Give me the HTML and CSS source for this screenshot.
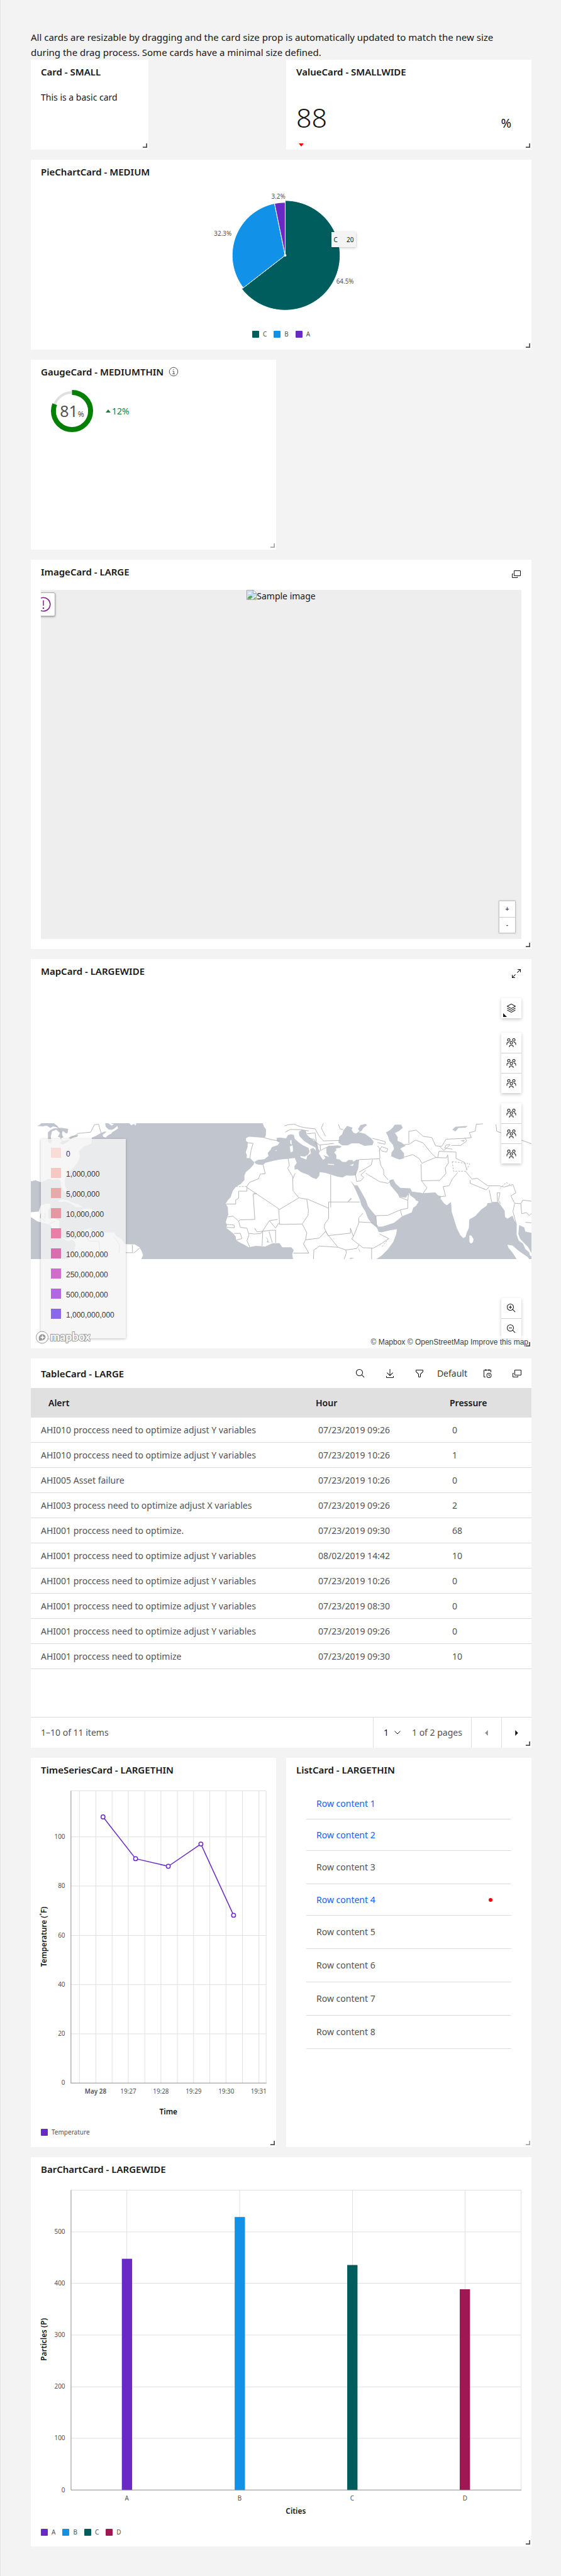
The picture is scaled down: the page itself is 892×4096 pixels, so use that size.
FILE: index.html
```html
<!DOCTYPE html>
<html lang="en">
<head>
<meta charset="utf-8">
<meta name="viewport" content="width=device-width, initial-scale=1">
<title>Dashboard cards</title>
<link rel="stylesheet" href="styles.css">
</head>
<body>
<svg class="sprite" aria-hidden="true">
  <symbol id="i-search" viewBox="0 0 32 32"><path d="M29,27.5859l-7.5521-7.5521a11.0177,11.0177,0,1,0-1.4141,1.4141L27.5859,29ZM4,13a9,9,0,1,1,9,9A9.01,9.01,0,0,1,4,13Z"/></symbol>
  <symbol id="i-download" viewBox="0 0 32 32"><path d="M26 24v4H6V24H4v4a2 2 0 002 2H26a2 2 0 002-2V24zM26 14L24.59 12.59 17 20.17 17 2 15 2 15 20.17 7.41 12.59 6 14 16 24 26 14z"/></symbol>
  <symbol id="i-filter" viewBox="0 0 32 32"><path d="M18,28H14a2,2,0,0,1-2-2V18.41L4.59,11A2,2,0,0,1,4,9.59V6A2,2,0,0,1,6,4H26a2,2,0,0,1,2,2V9.59A2,2,0,0,1,27.41,11L20,18.41V26A2,2,0,0,1,18,28ZM6,6V9.59l8,8V26h4V17.59l8-8V6Z"/></symbol>
  <symbol id="i-popup" viewBox="0 0 32 32"><path d="M28,4H10A2,2,0,0,0,8,6V20a2,2,0,0,0,2,2H28a2,2,0,0,0,2-2V6A2,2,0,0,0,28,4Zm0,16H10V6H28ZM18,26H4V16H6V14H4a2,2,0,0,0-2,2V26a2,2,0,0,0,2,2H18a2,2,0,0,0,2-2V24H18Z"/></symbol>
  <symbol id="i-max" viewBox="0 0 32 32"><path d="M20 2V4H26.586L18 12.582 19.414 14 28 5.414V12H30V2ZM14 19.416L12.592 18 4 26.586V20H2V30H12V28H5.414Z"/></symbol>
  <symbol id="i-calendar" viewBox="0 0 32 32"><path d="M21,30a8,8,0,1,1,8-8A8,8,0,0,1,21,30Zm0-14a6,6,0,1,0,6,6A6,6,0,0,0,21,16ZM22.59 25L20 22.41V18H22V21.59L24 23.59ZM28,6a2,2,0,0,0-2-2H22V2H20V4H12V2H10V4H6A2,2,0,0,0,4,6V26a2,2,0,0,0,2,2h4V26H6V6h4V8h2V6h8V8h2V6h4v6h2Z"/></symbol>
  <symbol id="i-layers" viewBox="0 0 32 32"><path d="M16,24a1,1,0,0,1-.4741-.12l-13-7L3.474,15.12,16,21.8643,28.526,15.12l.948,1.7607-13,7A1,1,0,0,1,16,24ZM16,30a1,1,0,0,1-.4741-.12l-13-7L3.474,21.12,16,27.8643,28.526,21.12l.948,1.7607-13,7A1,1,0,0,1,16,30ZM16,18a1,1,0,0,1-.4741-.12l-13-7a1,1,0,0,1,0-1.7607l13-7a1,1,0,0,1,.9482,0l13,7a1,1,0,0,1,0,1.7607l-13,7A1,1,0,0,1,16,18ZM5.1094,10,16,15.8643,26.8906,10,16,4.1358Z"/></symbol>
  <symbol id="i-people" viewBox="0 0 32 32"><path d="M26,14H24v2h2a3,3,0,0,1,3,3v4h2V19A5,5,0,0,0,26,14ZM24,4a3,3,0,1,1-3,3,3,3,0,0,1,3-3m0-2a5,5,0,1,0,5,5A5,5,0,0,0,24,2ZM23,30H21V28a3,3,0,0,0-3-3H14a3,3,0,0,0-3,3v2H9V28a5,5,0,0,1,5-5h4a5,5,0,0,1,5,5ZM16,13a3,3,0,1,1-3,3,3,3,0,0,1,3-3m0-2a5,5,0,1,0,5,5A5,5,0,0,0,16,11ZM8,14H6a5,5,0,0,0-5,5v4H3V19a3,3,0,0,1,3-3H8ZM8,4A3,3,0,1,1,5,7,3,3,0,0,1,8,4M8,2a5,5,0,1,0,5,5A5,5,0,0,0,8,2Z"/></symbol>
  <symbol id="i-glass" viewBox="0 0 32 32"><path d="M21.4479,20A10.856,10.856,0,0,0,24,13,11,11,0,1,0,13,24a10.856,10.856,0,0,0,7-2.5521L27.5859,29,29,27.5859ZM13,22a9,9,0,1,1,9-9A9.01,9.01,0,0,1,13,22Z"/></symbol>
  <symbol id="i-grip" viewBox="0 0 8 8"><path d="M6 0h2v8H0V6h6z"/></symbol>
</svg>

<main class="page">
  <p class="intro">All cards are resizable by dragging and the card size prop is automatically updated to match the new size during the drag process. Some cards have a minimal size defined.</p>

  <div class="grid">
    <section class="card card-small">
      <header class="head"><h2>Card - SMALL</h2></header>
      <p class="basic">This is a basic card</p>
      <svg class="grip"><use href="#i-grip"/></svg>
    </section>

    <section class="card card-smallwide">
      <header class="head"><h2>ValueCard - SMALLWIDE</h2></header>
      <div class="value"><span class="value-num">88</span><span class="value-unit">%</span></div>
      <svg class="value-trend" viewBox="0 0 8 5"><path d="M0 0h8L4 5z"/></svg>
      <svg class="grip"><use href="#i-grip"/></svg>
    </section>

    <section class="card card-medium">
      <header class="head"><h2>PieChartCard - MEDIUM</h2></header>
      <div class="plot">
        <svg class="chart" viewBox="0 0 803 218">
          <g class="pie">
            <path fill="#005d5d" d="M408 105V17A88 88 0 1 1 338.4 158.8Z"/>
            <path fill="#1192e8" d="M408 105L340.8 157A85 85 0 0 1 390.9 21.7Z"/>
            <path fill="#6929c4" d="M408 105L390.9 21.7A85 85 0 0 1 408 20Z"/>
          </g>
          <circle cx="408" cy="105" r="2" fill="#fff"/>
          <g class="tick mid"><text x="397" y="14">3.2%</text><text x="308" y="74">32.3%</text><text x="504" y="150">64.5%</text></g>
        </svg>
        <div class="tip"><span>C</span><span>20</span></div>
      </div>
      <ul class="legend legend-center">
        <li><i class="sw teal"></i>C</li><li><i class="sw blue"></i>B</li><li><i class="sw purple"></i>A</li>
      </ul>
      <svg class="grip"><use href="#i-grip"/></svg>
    </section>

    <section class="card card-mediumthin">
      <header class="head"><h2>GaugeCard - MEDIUMTHIN</h2>
        <button class="info" aria-label="More information"><svg viewBox="0 0 16 16"><circle cx="8" cy="8" r="6.8"/><path d="M6.5 7.2H8.3V11.5M6.2 11.5H10M7.3 4.6H8.6"/></svg></button>
      </header>
      <div class="gauge">
        <div class="dial">
          <svg viewBox="0 0 68 68"><circle class="dial-track" cx="34" cy="34" r="30"/><circle class="dial-value" cx="34" cy="34" r="30" pathLength="100" transform="rotate(-90 34 34)"/></svg>
          <p class="dial-text"><span>81</span><small>%</small></p>
        </div>
        <p class="trend"><svg viewBox="0 0 8 5"><path d="M0 5h8L4 0z"/></svg>12%</p>
      </div>
      <svg class="grip faint"><use href="#i-grip"/></svg>
    </section>

    <section class="card card-large">
      <header class="head"><h2>ImageCard - LARGE</h2><button class="tool" aria-label="Expand"><svg><use href="#i-popup"/></svg></button></header>
      <div class="picture">
        <span class="broken"><svg viewBox="0 0 16 16"><path fill="#fff" stroke="#a0a0a0" d="M.5 .5H11L15.500 5V15.500H.5z"/><path fill="#c3d9f7" d="M1.500 1.500H10V6H14.500V9L9 14.500H1.500z"/><path fill="#fff" d="M2.500 6Q3 3.500 5 4 7 3 7.500 6z"/><path fill="#53a93f" d="M1.500 14.500V13Q6 7 9.500 10.500L6.500 14.500zM10 14.500L14.500 11V14.500z"/><path fill="none" stroke="#a0a0a0" d="M10.500 .5V5.500H15.500"/></svg>Sample image</span>
        <button class="hotspot" aria-label="Alert"><svg viewBox="0 0 24 24"><circle cx="12" cy="12" r="10.800"/><path d="M12 5.500V14"/><circle class="dot" cx="12" cy="18" r="1.300"/></svg></button>
        <div class="stepper"><button>+</button><button>-</button></div>
      </div>
      <svg class="grip"><use href="#i-grip"/></svg>
    </section>

    <section class="card card-large">
      <header class="head"><h2>MapCard - LARGEWIDE</h2><button class="tool" aria-label="Expand"><svg><use href="#i-max"/></svg></button></header>
      <svg class="map" viewBox="12 15 2409 654" role="img" aria-label="World map">
        <rect class="sea" x="12" y="15" width="2409" height="654"/>
        <g class="land">
          <path d="M12 15H370L372 32 386 45 400 47 412 42 428 28 432 40 418 50 404 58 398 66 385 72 372 84 360 80 358 70 377 56 366 55 348 63 325 76 306 84 303 112 285 122 268 126 255 138 243 150 248 172 245 188 234 208 218 228 196 246 185 268 176 285 176 315 186 336 190 360 180 352 168 338 158 318 154 290 138 284 118 288 96 282 72 296 58 298 35 290 12 294Z"/>
          <path d="M485 15H520L516 26 508 18 496 25ZM305 15L314 26 306 22ZM385 15L400 26 412 20 395 15Z"/>
          <path d="M12 443L50 440 60 410 84 403 108 402 104 424 95 435 97 474 122 472 150 484 148 540 162 565 185 573 200 565 224 574 240 558 268 530 290 522 302 534 335 530 352 540 380 541 412 540 425 560 448 572 465 597 512 598 535 612 545 630 552 650 544 669H190L214 645 228 600 222 584 208 574 196 582 182 578 145 562 120 535 108 506 80 496 45 488 12 467Z"/>
          <path d="M140 388L165 381 190 386 215 398 240 405 262 418 228 418 206 402 178 392 150 395ZM258 428L300 425 328 440 300 446 266 441ZM285 528L300 518 310 522Z"/>
          <path d="M1128 15L1134 32 1144 45 1143 72 1138 86 1100 82 1062 80 1048 86 1047 98 1056 108 1055 130 1046 155 1052 168 1050 182 1068 184 1080 196 1088 203 1084 214 1068 232 1047 250 1040 266 1040 288 1022 308 1000 320 984 340 974 370 960 386 950 402 960 420 962 455 950 490 956 502 954 520 985 545 998 560 1000 578 1020 590 1040 600 1060 612 1095 605 1140 608 1176 592 1209 592 1222 612 1265 612 1277 625 1270 645 1274 669H1674L1700 652 1730 622 1756 586 1770 550 1774 525 1740 530 1700 540 1686 538 1678 520 1682 513 1705 512 1760 494 1800 462 1845 444 1852 422 1866 412 1878 392 1864 386 1858 374 1838 362 1834 344 1850 345 1899 352 1958 348 1972 362 1986 366 1984 378 2000 400 2014 410 2034 394 2037 440 2050 482 2062 520 2078 552 2092 567 2104 562 2110 540 2120 520 2122 478 2150 462 2180 430 2205 412 2210 399 2262 395 2272 408 2292 436 2294 466 2306 474 2330 460 2340 485 2350 500 2350 552 2360 580 2380 594 2392 620 2410 636 2414 652 2421 655V15Z"/>
          <path d="M2306 600L2330 604 2358 628 2384 646 2404 660 2410 669H2350L2330 638 2310 614ZM2122 555L2132 556 2142 572 2140 588 2130 594 2123 588Z"/>
        </g>
        <g class="sea">
          <path d="M42 28L56 22 62 15H120L140 28 146 38 120 30 106 38 88 26 70 30ZM94 60L106 48 122 40 160 37 192 42 188 65 178 62 166 52 160 70 170 82 160 86 142 80 152 62 134 46 114 54 108 80 113 104 104 112 95 104ZM150 112L166 100 200 94 190 104 166 118ZM192 86L208 76 240 70 236 80 205 88Z"/>
          <path d="M1088 201L1104 191 1136 188 1156 172 1152 158 1166 142 1172 130 1200 120 1209 108 1196 102 1195 86 1209 84 1240 88 1250 72 1266 68 1278 72 1282 90 1300 106 1320 120 1348 134 1354 152 1346 166 1330 176 1308 172 1312 180 1338 190 1342 172 1360 160 1356 140 1370 134 1380 142 1384 150 1382 132 1354 118 1326 100 1304 76 1302 56 1318 46 1336 52 1340 70 1362 90 1390 108 1396 140 1404 148 1398 160 1418 192 1430 182 1420 168 1448 178 1434 160 1434 132 1450 124 1490 122 1508 126 1500 134 1480 136 1482 146 1472 156 1482 168 1482 186 1498 190 1510 200 1528 202 1540 192 1560 192 1564 200 1580 190 1592 190 1588 230 1576 266 1550 268 1530 266 1512 276 1488 272 1454 262 1430 254 1402 250 1400 268 1386 284 1364 276 1348 264 1312 250 1294 236 1282 238 1280 222 1292 206 1282 182 1250 186 1209 190 1180 196 1140 206 1130 216 1106 214 1094 210Z"/>
          <path d="M1492 108L1496 80 1510 68 1516 50 1534 28 1560 36 1556 48 1566 62 1578 64 1594 52 1586 44 1598 24 1622 18 1630 24 1612 38 1604 52 1590 58 1620 66 1650 88 1662 104 1656 120 1618 124 1590 112 1556 112 1536 122 1510 122Z"/>
          <path d="M1721 60L1740 48 1752 38 1764 22 1794 22 1802 38 1784 52 1764 62 1778 82 1776 100 1796 108 1816 124 1798 132 1790 138 1808 160 1808 184 1786 190 1764 182 1746 174 1748 156 1760 138 1754 118 1738 100 1730 76Z"/>
          <path d="M1737 290L1756 284 1768 306 1790 326 1838 328 1846 344 1900 352 1880 386 1856 376 1836 360 1834 350 1816 374 1786 370 1778 356 1758 332 1742 314Z"/>
          <path d="M1549 290L1570 314 1584 314 1606 352 1626 388 1634 414 1658 444 1674 462 1676 500 1692 524 1676 516 1652 498 1634 472 1622 440 1602 408 1596 384 1580 348 1566 318Z"/>
          <path d="M2040 46L2056 32 2114 28 2104 36 2070 38 2056 54ZM2078 98L2102 96 2094 104ZM1532 398L1552 374 1556 380 1544 390ZM1140 560L1152 572 1156 586 1166 590 1146 588 1152 578ZM1586 610L1598 636 1592 630ZM1545 669L1550 662 1570 664Z"/>
          <path d="M2362 505L2386 516 2392 536 2421 542V640L2404 610 2384 590 2366 570 2358 548Z"/>
        </g>
        <path class="land" d="M1260 98L1266 95 1268 118 1260 112ZM1258 126L1272 122 1274 150 1262 156ZM1440 210L1472 212 1470 216 1442 214ZM1546 218L1566 210 1562 220ZM1188 146L1196 144 1192 150ZM1410 150L1420 148 1436 168 1428 172Z"/>
        <path class="border" d="M120 15L146 38 162 70 156 90 170 112 205 88 240 64 300 58 318 22 338 20 350 62M60 450L58 470 82 488M80 448V474M100 500L130 486M280 560L290 582 340 584 344 630 320 640M410 560L440 600 436 640M465 638L502 638 500 600M536 616L506 640M1138 86L1180 96 1209 100M1048 108L1082 112 1072 144 1066 184M1130 216L1140 258 1116 260 1108 282 1064 300 1052 318V342H1012V376L998 384V404H952M1052 324L1195 420 1209 430 1302 374 1348 382 1445 424V394H1594M1082 354H1098L1082 356 1090 478 1020 480 1012 486 984 462 960 466M1455 262V420M1250 184L1256 218 1248 232 1262 256 1272 272 1274 340 1302 374M1272 284L1284 256M1340 382L1348 436 1346 458 1318 500 1209 502 1205 428M1318 500L1340 542 1334 576 1324 596 1350 640H1276M1334 576L1400 568 1430 536 1440 550 1490 612 1400 606 1390 614 1374 625 1372 669M1445 424V474L1426 500 1424 518 1442 556 1550 544V520L1564 560 1590 496 1590 470 1610 448M1590 490L1660 494 1680 520M1564 560L1556 572 1610 614 1660 616 1700 594 1734 570 1690 548M1652 616V669M1490 612L1528 625 1530 640 1520 669M1528 625L1580 618 1592 600M956 502L990 505 992 518 955 516M990 545L1020 545 1028 570 1000 578M1012 486L1020 516 1052 520 1062 552 1052 580 1066 612M1062 545L1090 548 1120 545 1160 484 1200 478M1128 535L1125 605M1158 535L1174 590M1190 530V590M1090 520L1100 538 1168 530 1192 530M1160 484L1190 520 1205 495M1592 190L1690 186 1696 218 1710 240 1710 262 1732 288M1592 250L1624 232 1650 216 1656 190M1624 256L1690 296 1730 304 1750 290M1572 250L1580 295 1600 292 1614 276 1600 264 1624 242M1676 512L1672 460 1730 458 1790 432 1798 462M1784 370L1826 386 1830 355M1790 432L1826 424V386M1656 88L1690 96 1718 104 1716 116 1680 108M1680 124L1700 148 1724 154 1730 138 1700 128 1690 142 1692 186M1831 112V54L1866 48 1900 78 1942 84 1960 124 1990 126 2010 92 2100 88 2132 84 2122 60 2150 54 2156 20 2188 18M1808 118L1832 116 1864 96 1900 110 1940 160 1962 180M1808 178L1850 166 1882 186 1894 208 1920 196 1960 180 2012 182 2018 168 2022 206 2006 230 2010 256 1980 290 1892 292 1890 212M1892 292L1918 326 1900 352M2066 252L2040 284 2024 316 1996 320 2008 366 1980 368M2105 248L2135 284 2160 280 2210 316 2264 316 2290 322 2332 310 2346 350 2322 364 2340 400 2370 402 2380 385 2421 390M2126 288V304L2204 336 2218 320M2218 336L2230 396 2258 396 2256 350M2256 350L2270 350 2262 386 2272 402M2340 402L2332 440 2348 500M2370 402L2374 450 2398 445 2410 460 2421 450M2392 492L2421 494M2250 20L2254 54 2290 66 2421 114M1980 128L2000 146 2030 118 2010 120 2004 134 2040 140M1970 180L1976 150 2058 154V184L2100 204 2110 240M2100 84L2110 100 2080 122 2036 122M1232 28L1250 22 1280 20 1310 32 1340 38 1380 42 1400 78 1420 100 1500 98M1236 58L1260 45 1310 46 1350 52M1340 66L1380 62 1386 108 1400 120 1470 112M1404 118L1406 146 1450 124M1420 15L1410 38 1430 78M1492 20L1500 42 1516 46M1348 88L1376 92 1390 130"/>
        <path class="border dashed" d="M1000 320H1052M2040 200L2046 246 2106 246 2124 210 2090 206ZM2270 330L2300 300 2326 318M1734 570L1700 612"/>
      </svg>
      <div class="map-legend">
        <ul>
          <li><i style="background:#fadcd7"></i>0</li>
          <li><i style="background:#f6c8c2"></i>1,000,000</li>
          <li><i style="background:#e7aaa8"></i>5,000,000</li>
          <li><i style="background:#e598a1"></i>10,000,000</li>
          <li><i style="background:#e77fa6"></i>50,000,000</li>
          <li><i style="background:#d76fae"></i>100,000,000</li>
          <li><i style="background:#ce6dcb"></i>250,000,000</li>
          <li><i style="background:#b167df"></i>500,000,000</li>
          <li><i style="background:#8a68e8"></i>1,000,000,000</li>
        </ul>
      </div>
      <div class="map-tools">
        <div class="tools"><button class="corner" aria-label="Layers"><svg><use href="#i-layers"/></svg></button></div>
        <div class="tools"><button aria-label="Group 1"><svg><use href="#i-people"/></svg></button><button aria-label="Group 2"><svg><use href="#i-people"/></svg></button><button aria-label="Group 3"><svg><use href="#i-people"/></svg></button></div>
        <div class="tools"><button aria-label="Group 4"><svg><use href="#i-people"/></svg></button><button aria-label="Group 5"><svg><use href="#i-people"/></svg></button><button aria-label="Group 6"><svg><use href="#i-people"/></svg></button></div>
        <div class="tools tools-end"><button aria-label="Zoom in"><svg viewBox="0 0 32 32"><use href="#i-glass"/><path d="M12 8h2v4h4v2h-4v4h-2v-4H8v-2h4z"/></svg></button><button aria-label="Zoom out"><svg viewBox="0 0 32 32"><use href="#i-glass"/><path d="M8 12h10v2H8z"/></svg></button></div>
      </div>
      <svg class="mapbox" viewBox="0 0 88 23"><circle class="mb-ring" cx="11" cy="11.500" r="9.500"/><path class="mb-mark" d="M6 16.500Q4.500 8 10 6.500 16 6 16.500 11 16 17.500 6 16.500Z"/><path fill="#fff" d="M11.500 7.500L12.600 10.400 15.500 11.500 12.600 12.600 11.500 15.500 10.400 12.600 7.500 11.500 10.400 10.400Z"/><text x="24" y="17">mapbox</text></svg>
      <p class="credit"><a href="#">© Mapbox</a> <a href="#">© OpenStreetMap</a> <a href="#">Improve this map</a></p>
      <svg class="grip"><use href="#i-grip"/></svg>
    </section>

    <section class="card card-large">
      <header class="head head-bar"><h2>TableCard - LARGE</h2>
        <div class="toolbar">
          <button aria-label="Search"><svg><use href="#i-search"/></svg></button>
          <button aria-label="Download"><svg><use href="#i-download"/></svg></button>
          <button aria-label="Filter"><svg><use href="#i-filter"/></svg></button>
          <span class="range">Default</span>
          <button aria-label="Time range"><svg><use href="#i-calendar"/></svg></button>
          <button aria-label="Expand"><svg><use href="#i-popup"/></svg></button>
        </div>
      </header>
      <table>
        <colgroup><col class="c1"><col class="c2"><col></colgroup>
        <thead><tr><th>Alert</th><th>Hour</th><th>Pressure</th></tr></thead>
        <tbody>
          <tr><td>AHI010 proccess need to optimize adjust Y variables</td><td>07/23/2019 09:26</td><td>0</td></tr>
          <tr><td>AHI010 proccess need to optimize adjust Y variables</td><td>07/23/2019 10:26</td><td>1</td></tr>
          <tr><td>AHI005 Asset failure</td><td>07/23/2019 10:26</td><td>0</td></tr>
          <tr><td>AHI003 process need to optimize adjust X variables</td><td>07/23/2019 09:26</td><td>2</td></tr>
          <tr><td>AHI001 proccess need to optimize.</td><td>07/23/2019 09:30</td><td>68</td></tr>
          <tr><td>AHI001 proccess need to optimize adjust Y variables</td><td>08/02/2019 14:42</td><td>10</td></tr>
          <tr><td>AHI001 proccess need to optimize adjust Y variables</td><td>07/23/2019 10:26</td><td>0</td></tr>
          <tr><td>AHI001 proccess need to optimize adjust Y variables</td><td>07/23/2019 08:30</td><td>0</td></tr>
          <tr><td>AHI001 proccess need to optimize adjust Y variables</td><td>07/23/2019 09:26</td><td>0</td></tr>
          <tr><td>AHI001 proccess need to optimize</td><td>07/23/2019 09:30</td><td>10</td></tr>
        </tbody>
      </table>
      <footer class="pager">
        <span class="pager-count">1–10 of 11 items</span>
        <div class="pager-page">
          <span class="pick"><select aria-label="Page"><option>1</option><option>2</option></select><svg viewBox="0 0 10 6"><path d="M.5 .5L5 5 9.500 .5"/></svg></span>
          <span>1 of 2 pages</span>
        </div>
        <button class="pager-btn" disabled aria-label="Previous page"><svg viewBox="0 0 4 8"><path d="M4 0v8L0 4z"/></svg></button>
        <button class="pager-btn" aria-label="Next page"><svg viewBox="0 0 4 8"><path d="M0 0v8l4-4z"/></svg></button>
      </footer>
      <svg class="grip"><use href="#i-grip"/></svg>
    </section>

    <section class="card card-largethin">
      <header class="head"><h2>TimeSeriesCard - LARGETHIN</h2></header>
      <svg class="chart" viewBox="0 0 394 542">
        <path class="gridline" d="M78 5V474M104.500 5V474M130.500 5V474M156.500 5V474M183 5V474M209 5V474M235.500 5V474M261.500 5V474M287.500 5V474M313.500 5V474M340 5V474M366.500 5V474M378 5V474M64.500 4.500H378M64.500 78.500H378M64.500 157.500H378M64.500 237H378M64.500 316H378M64.500 395H378"/>
        <path class="axis" d="M64.500 4.500V474M64 474H378.500"/>
        <path class="series" d="M116 46.500L168.300 113.600 220.800 125.800 273.200 90 325.700 204.500"/>
        <g class="points"><circle cx="116" cy="46.500" r="3.200"/><circle cx="168.300" cy="113.600" r="3.200"/><circle cx="220.800" cy="125.800" r="3.200"/><circle cx="273.200" cy="90" r="3.200"/><circle cx="325.700" cy="204.500" r="3.200"/></g>
        <g class="tick end"><text x="55" y="82">100</text><text x="55" y="161">80</text><text x="55" y="240">60</text><text x="55" y="319">40</text><text x="55" y="398">20</text><text x="55" y="477">0</text></g>
        <g class="tick mid"><text class="strong" x="104" y="491">May 28</text><text x="156.500" y="491">19:27</text><text x="209" y="491">19:28</text><text x="261.500" y="491">19:29</text><text x="314" y="491">19:30</text><text x="366" y="491">19:31</text></g>
        <g class="axis-title"><text x="221" y="524">Time</text><text transform="translate(25 239) rotate(-90)">Temperature (˚F)</text></g>
      </svg>
      <ul class="legend"><li><i class="sw purple"></i>Temperature</li></ul>
      <svg class="grip"><use href="#i-grip"/></svg>
    </section>

    <section class="card card-largethin">
      <header class="head"><h2>ListCard - LARGETHIN</h2></header>
      <ul class="list">
        <li class="row-link"><a href="#">Row content 1</a></li>
        <li class="row-link"><a href="#">Row content 2</a></li>
        <li>Row content 3</li>
        <li class="row-link"><a href="#">Row content 4</a><i class="status"></i></li>
        <li>Row content 5</li>
        <li>Row content 6</li>
        <li>Row content 7</li>
        <li>Row content 8</li>
      </ul>
      <svg class="grip faint"><use href="#i-grip"/></svg>
    </section>

    <section class="card card-large">
      <header class="head"><h2>BarChartCard - LARGEWIDE</h2></header>
      <svg class="chart" viewBox="0 0 803 542">
        <path class="gridline" d="M154 4V485M335 4V485M516 4V485M696.500 4V485M786.500 4V485M64.500 4.500H786M64.500 71.500H786M64.500 154H786M64.500 237H786M64.500 320H786M64.500 402.500H786"/>
        <rect fill="#6929c4" x="146" y="114.600" width="16.500" height="371"/><rect fill="#1192e8" x="327" y="47.600" width="16.500" height="438"/><rect fill="#005d5d" x="507.500" y="124.600" width="16.500" height="361"/><rect fill="#9f1853" x="688" y="163.500" width="16.500" height="322"/>
        <path class="axis" d="M64.500 4.500V485.500H787"/>
        <g class="tick end"><text x="55" y="75">500</text><text x="55" y="157">400</text><text x="55" y="240">300</text><text x="55" y="323">200</text><text x="55" y="406">100</text><text x="55" y="489">0</text></g>
        <g class="tick mid"><text x="154" y="502">A</text><text x="335" y="502">B</text><text x="515.500" y="502">C</text><text x="696.500" y="502">D</text></g>
        <g class="axis-title"><text x="425" y="524">Cities</text><text transform="translate(25 244) rotate(-90)">Particles (P)</text></g>
      </svg>
      <ul class="legend"><li><i class="sw purple"></i>A</li><li><i class="sw blue"></i>B</li><li><i class="sw teal"></i>C</li><li><i class="sw magenta"></i>D</li></ul>
      <svg class="grip"><use href="#i-grip"/></svg>
    </section>
  </div>
</main>
</body>
</html>
```
FILE: styles.css
```css
* { box-sizing: border-box; }

body {
  margin: 0;
  background: #f3f3f3;
  color: #161616;
  font: 14px/20px "Noto Sans", "Open Sans", sans-serif;
}

h2, p, ul { margin: 0; padding: 0; }
ul { list-style: none; }
a { color: inherit; text-decoration: none; }
svg { fill: currentColor; }

button {
  display: flex;
  align-items: center;
  justify-content: center;
  margin: 0;
  padding: 0;
  border: 0;
  background: none;
  color: #161616;
  font: inherit;
}

.sprite { position: absolute; width: 0; height: 0; }

.page {
  padding: 47px 47px 47px 48px;
  border-left: 1px solid #e4e4e4;
}

.intro { padding-right: 16px; font-size: 15px; line-height: 24px; }

.grid {
  display: grid;
  grid-template-columns: repeat(4, 1fr);
  gap: 16px;
}

.card {
  position: relative;
  display: flex;
  flex-direction: column;
  background: #fff;
  min-width: 0;
}

.card-small { min-height: 143px; }
.card-smallwide { grid-column: 3 / 5; min-height: 143px; }
.card-medium { grid-column: 1 / 5; min-height: 302px; }
.card-mediumthin { grid-column: 1 / 3; min-height: 302px; }
.card-large { grid-column: 1 / 5; min-height: 619px; }
.card-largethin { grid-column: span 2; min-height: 619px; }

.head {
  display: flex;
  align-items: flex-start;
  height: 48px;
  padding: 9px 16px 0;
}

.head h2 { font-size: 15px; line-height: 20px; font-weight: 600; }

.grip {
  position: absolute;
  right: 2px;
  bottom: 3px;
  width: 7px;
  height: 7px;
  color: #525252;
}
.faint { color: #a8a8a8; }

.tool { margin-left: auto; padding-top: 6px; }
.tool svg, .toolbar svg, .tools svg { display: block; width: 16px; height: 16px; }

.basic { padding: 2px 16px 0; }

/* value */
.value {
  display: flex;
  align-items: baseline;
  justify-content: space-between;
  padding: 20px 32px 0 16px;
  line-height: 48px;
}
.value-num { font-size: 43px; font-weight: 300; }
.value-unit { font-size: 20px; }
.value-trend { width: 8px; height: 5px; margin: 8px 20px 0; color: #f00; }

/* charts */
.plot { position: relative; }
.chart { display: block; width: 100%; }
.pie path { stroke: #fff; stroke-width: 1; }
.tick { font-size: 10px; fill: #525252; }
.strong { font-weight: 600; }
.mid { text-anchor: middle; }
.end { text-anchor: end; }
.gridline { fill: none; stroke: #e0e0e0; }
.axis { fill: none; stroke: #8d8d8d; }
.axis-title { font-size: 12px; font-weight: 600; text-anchor: middle; }
.series { fill: none; stroke: #6929c4; stroke-width: 1.5; }
.points { fill: #fff; stroke: #6929c4; stroke-width: 1.5; }

.tip {
  position: absolute;
  left: 60%;
  top: 31%;
  display: flex;
  gap: 14px;
  padding: 2px 4px;
  background: #f4f4f4;
  box-shadow: 0 1px 4px rgba(0, 0, 0, .25);
  font-size: 10px;
  line-height: 20px;
}

.legend {
  display: flex;
  gap: 11px;
  padding: 0 16px;
  color: #525252;
  font-size: 10px;
  line-height: 22px;
}
.legend-center { justify-content: center; padding-top: 2px; }
.legend li { display: flex; align-items: center; gap: 6px; }
.sw { width: 11px; height: 11px; border-radius: 1px; }
.purple { background: #6929c4; }
.blue { background: #1192e8; }
.teal { background: #005d5d; }
.magenta { background: #9f1853; }

/* gauge */
.info { height: 20px; margin-left: 8px; }
.info svg { width: 16px; height: 16px; fill: none; stroke: #525252; }
.gauge { display: flex; align-items: center; gap: 20px; padding: 0 32px; }
.dial { position: relative; width: 67px; height: 67px; }
.dial svg { display: block; }
.dial circle { fill: none; }
.dial-track { stroke: #e0e0e0; stroke-width: 4; }
.dial-value { stroke: #008000; stroke-width: 8; stroke-dasharray: 81 100; }
.dial-text {
  position: absolute;
  inset: 0;
  display: flex;
  align-items: baseline;
  justify-content: center;
  color: #525252;
  font-size: 25px;
  line-height: 67px;
}
.dial-text small { font-size: 12px; }
.trend { display: flex; align-items: center; gap: 2px; color: #198038; }
.trend svg { width: 8px; height: 5px; }

/* image */
.picture {
  position: relative;
  flex: 1;
  margin: 0 16px 16px;
  background: #eee;
  overflow: hidden;
  text-align: center;
}
.broken { display: flex; align-items: flex-start; justify-content: center; }
.broken svg { width: 16px; height: 16px; }
.hotspot {
  position: absolute;
  left: -15px;
  top: 4px;
  width: 38px;
  height: 38px;
  border: 1px solid #aaa;
  border-radius: 3px;
  background: #fff;
  box-shadow: 0 1px 3px rgba(0, 0, 0, .35);
}
.hotspot svg { width: 24px; height: 24px; fill: none; stroke: #8a1a8f; stroke-width: 1.5; }
.hotspot .dot { fill: #8a1a8f; stroke: none; }
.stepper {
  position: absolute;
  right: 10px;
  bottom: 10px;
  background: #fff;
  box-shadow: 0 0 2px 1px rgba(0, 0, 0, .25);
}
.stepper button { width: 25px; height: 25px; font: 700 10px/16px "Liberation Sans", sans-serif; color: #444; }
.stepper button + button { border-top: 1px solid #ccc; }

/* map */
.map { display: block; width: 100%; margin-top: 213px; }
.sea { fill: #c1c6ce; }
.land { fill: #fff; }
.border { fill: none; stroke: #b5b5b5; stroke-width: 3; stroke-linejoin: round; }
.dashed { stroke-dasharray: 8 6; }
.map-legend {
  position: absolute;
  left: 16px;
  bottom: 16px;
  width: 135px;
  height: 317px;
  padding: 14px 16px;
  background: rgba(244, 244, 244, .8);
  box-shadow: 0 1px 4px rgba(0, 0, 0, .25);
  color: #393939;
  font: 12px/20px "Liberation Sans", Arial, sans-serif;
}
.map-legend ul { display: grid; gap: 12px; }
.map-legend li { display: flex; gap: 8px; height: 20px; }
.map-legend i { width: 16px; height: 16px; }
.map-tools {
  position: absolute;
  top: 62px;
  right: 16px;
  bottom: 16px;
  display: flex;
  flex-direction: column;
  gap: 16px;
}
.tools { background: #fff; box-shadow: 0 2px 5px rgba(0, 0, 0, .22); }
.tools button { position: relative; width: 32px; height: 32px; }
.tools button + button { border-top: 1px solid #d0d0d0; }
.tools:first-child { margin-bottom: 7px; }
.tools-end { margin-top: auto; }
.corner::after {
  content: "";
  position: absolute;
  left: 3px;
  bottom: 2px;
  border-top: 6px solid transparent;
  border-left: 6px solid #161616;
}
.mapbox { position: absolute; left: 7px; bottom: 6px; width: 88px; height: 23px; }
.mapbox text {
  fill: #fff;
  stroke: #999;
  stroke-width: 2;
  paint-order: stroke;
  font: 700 18px Lato, sans-serif;
}
.mb-ring { fill: #fff; stroke: #999; }
.mb-mark { fill: #999; }
.credit {
  position: absolute;
  right: 0;
  bottom: 0;
  padding: 0 5px;
  color: #404040;
  background: rgba(255, 255, 255, .5);
  font: 12px/20px "Liberation Sans", Arial, sans-serif;
}

/* table */
.head-bar { align-items: center; height: 47px; padding: 0 0 0 16px; }
.toolbar { display: flex; align-items: center; height: 47px; margin-left: auto; color: #393939; }
.toolbar button { width: 47px; height: 47px; }
.range { padding: 0 8px 0 4px; }
table { width: 100%; border-collapse: separate; border-spacing: 0; table-layout: fixed; }
.c1 { width: 441px; }
.c2 { width: 213px; }
th {
  height: 47px;
  padding: 0 12px;
  background: #e0e0e0;
  font-weight: 600;
  text-align: left;
}
th:first-child { padding-left: 28px; }
td {
  height: 40px;
  padding: 0 16px;
  border-bottom: 1px solid #dcdcdc;
  color: #525252;
}
.pager {
  display: flex;
  align-items: center;
  height: 49px;
  margin-top: auto;
  border-top: 1px solid #dcdcdc;
  color: #525252;
}
.pager-count { flex: 1; padding-left: 16px; }
.pager-page, .pager-btn { display: flex; align-items: center; height: 48px; border-left: 1px solid #e0e0e0; }
.pager-page { gap: 18px; width: 156px; padding-left: 16px; white-space: nowrap; }
.pager-btn { width: 48px; justify-content: center; }
.pager-btn svg { width: 5px; height: 9px; }
.pager-btn:disabled { color: #8d8d8d; }
.pick { display: flex; align-items: center; }
.pick select { appearance: none; width: 17px; padding: 0; border: 0; background: none; color: #161616; font: inherit; }
.pick svg { width: 10px; height: 6px; fill: none; stroke: #161616; }

/* list */
.list { padding: 0 32px; color: #525252; }
.list li {
  display: flex;
  align-items: center;
  justify-content: space-between;
  height: 53px;
  padding: 0 30px 0 16px;
  border-bottom: 1px solid #dcdcdc;
}
.list .row-link { height: 50px; }
.list a { color: #0f62fe; }
.status { width: 6px; height: 6px; border-radius: 50%; background: #f00; }
```
